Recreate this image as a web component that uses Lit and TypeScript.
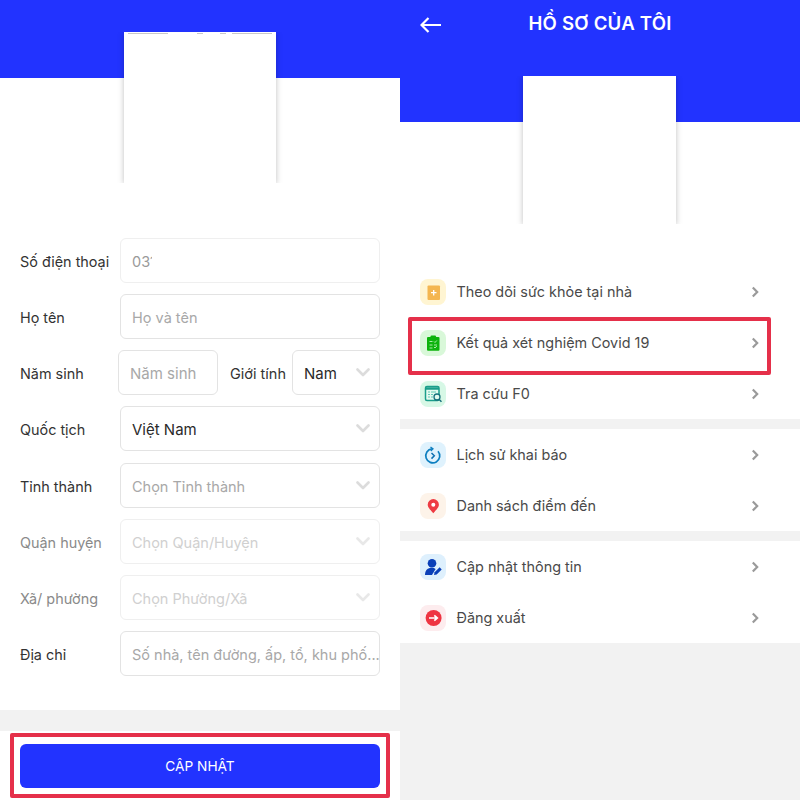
import { LitElement, html, css, svg } from "lit";
import { customElement } from "lit/decorators.js";

const chevDown = html`<svg class="dd" width="14" height="9" viewBox="0 0 14 9"><path d="M1.500 1.500 7 7l5.500-5.500" fill="none" stroke="currentColor" stroke-width="2.600" stroke-linecap="round" stroke-linejoin="round"/></svg>`;
const chevRight = html`<svg class="cr" width="8" height="12" viewBox="0 0 8 12"><path d="M1.800 1.500 6.200 6l-4.400 4.500" fill="none" stroke="#9a9a9a" stroke-width="2.200"/></svg>`;

const icons = {
  plus: svg`<rect x="7.500" y="6.500" width="12.500" height="14.500" rx="1" fill="#f4b650"/><path d="M13.700 11v5.500M11 13.700h5.500" stroke="#fff" stroke-width="1.300"/>`,
  clip: svg`<rect x="7" y="7" width="12.500" height="13.700" rx="1" fill="#0db30d"/><rect x="10.500" y="5.400" width="5.500" height="3" rx="1" fill="#0db30d"/><path d="M9.500 11.500h3M14 11.500l1 1 1.800-2M9.500 15h3M14 15h3M9.500 18h3M14 17l1 1 1.800-2" stroke="#a8eca8" stroke-width="1" fill="none"/>`,
  find: svg`<rect x="5.500" y="5.500" width="13.500" height="14" rx="1.500" fill="#e4faef" stroke="#1a9e8a" stroke-width="1.500"/><path d="M5.500 7.500h13.500" stroke="#1a9e8a" stroke-width="2.500"/><path d="M8 11h2M11 11h5M8 13.500h2M11 13.500h2M8 16h2M11 16h2" stroke="#62c9b5" stroke-width="1"/><circle cx="17" cy="16" r="3" fill="#e4faef" stroke="#17707c" stroke-width="1.300"/><path d="m19 18.200 2.500 2.500" stroke="#17707c" stroke-width="1.500"/>`,
  clock: svg`<path d="M18 9.200A7 7 0 1 1 12 6.900" fill="none" stroke="#0d7fc0" stroke-width="1.700"/><path d="m10.500 5 2.500 1.900L10.800 9" fill="none" stroke="#0d7fc0" stroke-width="1.300"/><path d="m11.500 11 2.800 2.800-2.800 2.800" fill="none" stroke="#0d6fb0" stroke-width="1.500"/>`,
  pin: svg`<path d="M13.300 20.300c-3.500-4-5.600-6.300-5.600-8.600a5.600 5.600 0 0 1 11.200 0c0 2.300-2.100 4.600-5.600 8.600z" fill="#ee3b43"/><circle cx="13.300" cy="11.700" r="2" fill="#fff"/>`,
  user: svg`<circle cx="12" cy="9.300" r="4.300" fill="#0a3fb8"/><path d="M5 21c0-4.800 2.800-7.200 6.800-7.200 1.500 0 2.800.4 3.800 1.100L12 21z" fill="#0a3fb8"/><path d="m14 21 .6-2.700 5-5 2.100 2.100-5 5z" fill="#0a3fb8"/>`,
  out: svg`<circle cx="13.600" cy="13" r="8" fill="#ee3442"/><path d="M9 13h8.500M14.300 10.300 17.300 13l-3 2.700" fill="none" stroke="#fff" stroke-width="1.700"/>`,
};

const fields: [string, string, boolean, string][] = [
  ["Quốc tịch", "Việt Nam", true, "val"],
  ["Tỉnh thành", "Chọn Tỉnh thành", true, "ph"],
  ["Quận huyện", "Chọn Quận/Huyện", true, "off"],
  ["Xã/ phường", "Chọn Phường/Xã", true, "off"],
  ["Địa chỉ", "Số nhà, tên đường, ấp, tổ, khu phố...", false, "ph"],
];

const groups: [keyof typeof icons, string, string, boolean][][] = [
  [
    ["plus", "#fff5d2", "Theo dõi sức khỏe tại nhà", false],
    ["clip", "#d9f8d9", "Kết quả xét nghiệm Covid 19", true],
    ["find", "#d7f8e6", "Tra cứu F0", false],
  ],
  [
    ["clock", "#dff2fd", "Lịch sử khai báo", false],
    ["pin", "#fdf3e9", "Danh sách điểm đến", false],
  ],
  [
    ["user", "#def0fd", "Cập nhật thông tin", false],
    ["out", "#fdecee", "Đăng xuất", false],
  ],
];

@customElement("app-root")
export class AppRoot extends LitElement {
  static styles = css`
    :host { display: grid; grid-template-columns: 400px 400px; width: 800px; height: 800px; overflow: hidden;
      font-family: Inter, "Liberation Sans", sans-serif; color: #333; background: #fff; }
    .pane { position: relative; height: 800px; display: flex; flex-direction: column; background: #fff; overflow: hidden; }
    .blue { background: #2233ff; flex: none; }
    .left .blue { height: 78px; }
    .right .blue { height: 122px; display: flex; align-items: flex-start; padding: 16px 0 0 20px; box-sizing: border-box; position: relative; }
    .title { position: absolute; left: 0; right: 0; top: 13px; text-align: center; color: #fff; font-size: 18.600px; font-weight: 600; line-height: 21px; letter-spacing: .2px; }
    .card { position: absolute; background: #fff; box-shadow: 0 1px 6px rgba(0,0,0,.25); }
    .left .card { left: 124px; top: 32px; width: 152px; height: 151px; clip-path: inset(0 -8px 0 -8px); }
    .right .card { left: 123px; top: 76px; width: 153px; height: 148px; clip-path: inset(0 -8px 0 -8px); }
    .rem { display: block; }
    .form { margin-top: 159.800px; padding: 0 20px; display: flex; flex-direction: column; gap: 11.200px; flex: none; }
    .row { display: flex; align-items: center; height: 45px; }
    .lab { width: 100px; flex: none; font-size: 14.400px; color: #333; padding-top: 2px; }
    .lab.off { color: #8a8a8a; }
    .box { flex: 1; min-width: 0; height: 45px; box-sizing: border-box; border: 1.500px solid #e3e3e3; border-radius: 6px; padding: 2px 11px 0; display: flex; align-items: center; justify-content: space-between; font-size: 14.500px; white-space: nowrap; overflow: hidden; color: #2a2a2a; }
    .box.off { border-color: #efefef; color: #d0d0d0; }
    .box.ph { color: #a8a8a8; }
    .box.val { font-size: 15px; }
    .box.faint { border-color: #efefef; color: #9a9a9a; justify-content: flex-start; }
    .clip { display: block; width: 20px; overflow: hidden; }
    .dd { flex: none; margin-right: -2px; margin-top: -2px; color: #dcdcdc; }
    .off .dd { color: #e8e8e8; }
    .year { flex: none; width: 100px; margin-left: -2px; font-size: 15px; }
    .sex { width: 62px; flex: none; font-size: 14.500px; margin-left: 12px; padding-top: 2px; }
    .nam { flex: none; width: 88px; font-size: 15px; }
    .band { background: #f2f2f2; flex: none; height: 21px; margin-top: 33.800px; }
    .foot { flex: 1; display: flex; flex-direction: column; padding: 13px 20px 0; position: relative; }
    .btn { height: 44px; background: #2233ff; border-radius: 6px; color: #fff; font-size: 13.700px; display: flex; align-items: center; justify-content: center; }
    .hl { position: absolute; border: 4px solid #e5304a; border-radius: 2px; box-sizing: border-box; pointer-events: none; }
    .foot .hl { left: 10px; top: 2px; width: 380px; height: 65px; }
    .list { margin-top: 144px; flex: none; display: flex; flex-direction: column; }
    .group { padding: 0 20px; display: flex; flex-direction: column; }
    .item { height: 51px; display: flex; align-items: center; gap: 10.500px; font-size: 14.400px; color: #4a4a4a; position: relative; }
    .ico { width: 26px; height: 26px; border-radius: 8px; flex: none; display: block; }
    .txt { flex: 1; }
    .cr { margin-right: 21px; }
    .item .hl { left: -12px; right: 9px; top: 0; height: 57.500px; }
    .sep { height: 10.200px; background: #f2f2f2; }
    .rest { flex: 1; background: #f2f2f2; }
  `;

  render() {
    return html`
      <section class="pane left">
        <div class="blue"></div>
        <div class="card">
          <svg class="rem" width="152" height="4"><path d="M4 1.500h40M73 1.500h6M96 1.500h6M108 1.500h40" stroke="#c8c8c8" fill="none"/></svg>
        </div>
        <div class="form">
          <div class="row"><span class="lab">Số điện thoại</span><div class="box faint"><span class="clip">031</span></div></div>
          <div class="row"><span class="lab">Họ tên</span><div class="box ph">Họ và tên</div></div>
          <div class="row">
            <span class="lab">Năm sinh</span>
            <div class="box ph year">Năm sinh</div>
            <span class="sex">Giới tính</span>
            <div class="box nam">Nam ${chevDown}</div>
          </div>
          ${fields.map(([l, v, dd, k]) => html`
            <div class="row">
              <span class="lab ${k === "off" ? "off" : ""}">${l}</span>
              <div class="box ${k}">${v}${dd ? chevDown : ""}</div>
            </div>`)}
        </div>
        <div class="band"></div>
        <div class="foot">
          <div class="btn">CẬP NHẬT</div>
          <div class="hl"></div>
        </div>
      </section>
      <section class="pane right">
        <div class="blue">
          <svg width="22" height="18" viewBox="0 0 22 18"><path d="M21 9H2M8.500 2 1.500 9l7 7" fill="none" stroke="#fff" stroke-width="2.200"/></svg>
          <div class="title">HỒ SƠ CỦA TÔI</div>
        </div>
        <div class="card"></div>
        <div class="list">
          ${groups.map((g, i) => html`
            ${i ? html`<div class="sep"></div>` : ""}
            <div class="group">
              ${g.map(([ic, bg, t, hl]) => html`
                <div class="item">
                  <svg class="ico" style="background:${bg}" viewBox="0 0 26 26">${icons[ic]}</svg>
                  <span class="txt">${t}</span>
                  ${chevRight}
                  ${hl ? html`<div class="hl"></div>` : ""}
                </div>`)}
            </div>`)}
        </div>
        <div class="rest"></div>
      </section>
    `;
  }
}
